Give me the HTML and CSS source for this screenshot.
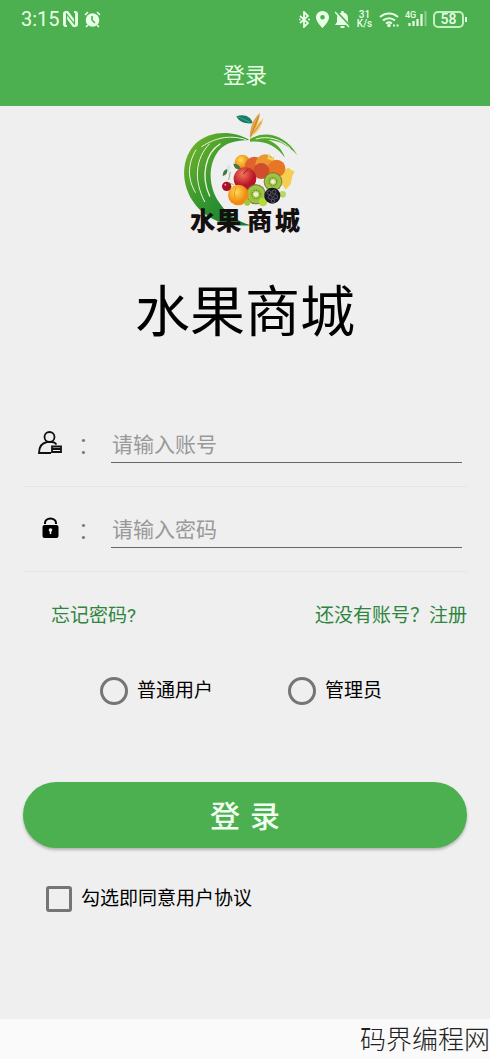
FILE: index.html
```html
<!DOCTYPE html>
<html lang="zh-CN">
<head>
    <meta charset="UTF-8">
    <meta name="viewport" content="width=device-width, initial-scale=1.0">
    <title>登录</title>
    <link rel="stylesheet" href="styles.css">
</head>
<body>
    <header class="header">
        <div class="status-bar">
            <div class="status-left">
                <span class="clock">3:15</span>
                <svg width="15" height="16" viewBox="0 0 15 16">
                    <path d="M3 0h2l6 8V0h1q3 0 3 3v10q0 3-3 3h-2L4 8v8H3q-3 0-3-3V3q0-3 3-3z" fill="#e9ffe6"/>
                    <path d="M5 1l6 8v3L4 4z" fill="#e9ffe6"/>
                    <path d="M3.500 14V3l8 10V2" fill="none" stroke="#4caf50" stroke-width="1.200"/>
                </svg>
                <svg class="alarm" width="17" height="17" viewBox="0 0 17 17">
                    <circle cx="8.5" cy="9" r="6.8" fill="#e9ffe6"/>
                    <path d="M1 4l3-3M16 4l-3-3M4 14l-2 2M13 14l2 2" stroke="#e9ffe6" stroke-width="1.6"/>
                    <path d="M8 5v4l3 3" fill="none" stroke="#4caf50" stroke-width="1.6"/>
                </svg>
            </div>
            <div class="status-right">
                <svg width="11" height="17" viewBox="0 0 11 17">
                    <path d="M1 5l8 7-4 4V1l4 4-8 7" fill="none" stroke="#e9ffe6" stroke-width="1.8"/>
                    <path d="M0 8.500h1.500M9 8.500h2" stroke="#e9ffe6" stroke-width="1.600"/>
                </svg>
                <svg width="13" height="17" viewBox="0 0 13 17">
                    <path fill-rule="evenodd" d="M6.500 0A6.400 6.400 0 0 0 0 6.500C0 11 6.500 17 6.500 17S13 11 13 6.500A6.400 6.400 0 0 0 6.500 0zm0 4a2.300 2.300 0 1 1 0 4.600 2.300 2.300 0 0 1 0-4.600z" fill="#e9ffe6"/>
                </svg>
                <svg width="15" height="17" viewBox="0 0 15 17">
                    <path d="M0 14l2-3V7c0-3 2-5 4.300-5.500V0h2.400v1.500C11.500 2 13 4 13 7v4l2 3zM5.500 15h4v2h-4z" fill="#e9ffe6"/>
                    <path d="M1 0l14 15" stroke="#4caf50" stroke-width="2"/>
                    <path d="M0 1l14 15" stroke="#e9ffe6" stroke-width="1.500"/>
                </svg>
                <span class="speed"><span>31</span><span>K/s</span></span>
                <svg width="20" height="17" viewBox="0 0 20 17">
                    <path d="M1 6a13 13 0 0 1 18 0M4 9.500a9 9 0 0 1 12 0M7 12.500a5 5 0 0 1 6 0" fill="none" stroke="#e9ffe6" stroke-width="2"/>
                    <circle cx="10" cy="14.500" r="1.800" fill="#e9ffe6"/>
                    <path d="M14 14.500h2M17.500 14.500h2" stroke="#e9ffe6" stroke-width="2"/>
                </svg>
                <svg width="22" height="18" viewBox="0 0 22 18">
                    <text class="network" x="0" y="8">4G</text>
                    <path d="M4.500 16v-3M8.500 16v-5M12.500 16V9M16.500 16V4" stroke="#e9ffe6" stroke-width="2.200"/>
                    <path d="M20.500 16V1" stroke="#8bd08b" stroke-width="2"/>
                </svg>
                <span class="battery">58</span>
            </div>
        </div>
        <div class="title-bar">登录</div>
    </header>

    <main class="content">
        <svg class="logo" width="150" height="134" viewBox="0 3 450 402" role="img" aria-label="水果商城">
            <defs>
                <linearGradient id="leaf" x1="0" y1="0" x2="1" y2="1">
                    <stop offset="0" stop-color="#7ab82c"/>
                    <stop offset=".5" stop-color="#36962f"/>
                    <stop offset="1" stop-color="#0b7a36"/>
                </linearGradient>
                <radialGradient id="red" cx=".4" cy=".3">
                    <stop offset="0" stop-color="#f4795a"/>
                    <stop offset="1" stop-color="#b9152a"/>
                </radialGradient>
                <radialGradient id="orange" cx=".4" cy=".35">
                    <stop offset="0" stop-color="#ffdc55"/>
                    <stop offset="1" stop-color="#f08a12"/>
                </radialGradient>
                <radialGradient id="kiwi">
                    <stop offset=".15" stop-color="#f2f3c4"/>
                    <stop offset=".4" stop-color="#8cb834"/>
                    <stop offset=".8" stop-color="#a4c84c"/>
                    <stop offset="1" stop-color="#6b6a24"/>
                </radialGradient>
            </defs>
            <!-- apple outline -->
            <path d="M238 105C190 76 120 76 78 115C34 158 32 230 66 285C102 342 166 367 242 361C198 348 164 320 142 284C112 232 116 166 153 130C176 108 208 107 238 105Z" fill="url(#leaf)"/>
            <path d="M240 102C284 76 344 86 382 150C352 118 323 106 294 105C318 115 335 130 345 158C317 119 281 106 240 110Z" fill="#51a62d"/>
            <g fill="none" stroke="#edf5dc" stroke-linecap="round">
                <path d="M78 135C50 180 54 225 76 262" stroke-width="3"/>
                <path d="M118 117C76 160 70 225 104 290" stroke-width="3"/>
                <path d="M150 117C105 145 92 215 119 273" stroke-width="4"/>
                <path d="M95 125C143 93 187 91 228 104" stroke-width="3"/>
                <path d="M258 102C292 91 334 102 360 129" stroke-width="3"/>
            </g>
            <!-- stem and leaf -->
            <path d="M199 34C222 25 244 35 248 55C225 57 207 51 199 34Z" fill="#137d68"/>
            <path d="M203 35L239 51" stroke="#65b6a0" stroke-width="2"/>
            <path d="M240 101C238 74 248 41 270 24C266 54 255 79 240 101Z" fill="#e5a743"/>
            <path d="M243 95C252 72 264 54 280 39C276 64 263 83 243 95Z" fill="#f0ca73"/>
            <path d="M242 94L267 32M250 84L274 51" stroke="#b76b22" stroke-width="2"/>
            <!-- fruit -->
            <path d="M333 199l23-11 8 7 10 4-7 15-5 24-15 16-13-20z" fill="#f5cf50"/>
            <circle cx="217" cy="172" r="23" fill="url(#orange)"/>
            <circle cx="253" cy="183" r="28" fill="#df632b"/>
            <circle cx="286" cy="178" r="30" fill="#eb9833"/>
            <circle cx="320" cy="190" r="26" fill="#e77725"/>
            <circle cx="274" cy="198" r="24" fill="#d24d2c"/>
            <path d="M292 162l4-17 6 13 12-3-6 12z" fill="#f2d45b"/>
            <circle cx="225" cy="221" r="34" fill="url(#red)"/>
            <path d="M220 208q5-10 14-14" fill="none" stroke="#7b2824" stroke-width="3"/>
            <circle cx="309" cy="230" r="28" fill="url(#kiwi)"/>
            <circle cx="258" cy="268" r="30" fill="url(#kiwi)"/>
            <g fill="none" stroke="#46551a" stroke-width="3" stroke-dasharray="2 5">
                <circle cx="309" cy="230" r="11"/>
                <circle cx="258" cy="268" r="12"/>
            </g>
            <circle cx="205" cy="270" r="31" fill="url(#orange)"/>
            <path d="M198 247q-8 17-3 34" fill="none" stroke="#df850d" stroke-width="2"/>
            <circle cx="232" cy="293" r="9" fill="#a4c834"/>
            <circle cx="279" cy="291" r="13" fill="#b5d83c"/>
            <circle cx="338" cy="268" r="10" fill="#b6d965"/>
            <circle cx="307" cy="272" r="24" fill="#171821"/>
            <g fill="none" stroke="#777383" stroke-width="2">
                <circle cx="297" cy="263" r="6"/><circle cx="312" cy="261" r="6"/>
                <circle cx="301" cy="277" r="6"/><circle cx="317" cy="275" r="6"/>
                <circle cx="309" cy="288" r="5"/>
            </g>
            <circle cx="170" cy="244" r="14" fill="#a80f25"/>
            <circle cx="166" cy="239" r="3" fill="#f19a91"/>
            <path d="M191 239l-17-7M176 225l5-25" stroke="#7a943c" stroke-width="2"/>
            <path d="M158 213q0-18 14-21q3 16-14 21zM190 176q17 0 23 16q-20 4-23-16z" fill="#48743e"/>
            <path d="M174 207l-3-26 10 2z" fill="#c6e9ee"/>
            <text class="logo-text" x="60" y="375">水</text>
            <text class="logo-text" x="138" y="375">果</text>
            <text class="logo-text" x="231" y="375">商</text>
            <text class="logo-text" x="314" y="375">城</text>
        </svg>

        <h1 class="app-name">水果商城</h1>

        <form class="login-form">
            <div class="field">
                <label class="field-label" for="account" aria-label="账号">
                    <svg width="26" height="26" viewBox="0 0 26 26" fill="none" stroke="#111" stroke-width="1.8">
                        <circle cx="11.500" cy="6" r="5"/>
                        <path d="M13 22H1c0-6 3-10 8-11h5c2 0 3.500 1 4.500 2.500"/>
                        <path d="M14 15.500h9V21h-9zM14 18h9"/>
                    </svg>
                    <span class="colon">:</span>
                </label>
                <input type="text" id="account" placeholder="请输入账号">
            </div>
            <div class="field">
                <label class="field-label" for="password" aria-label="密码">
                    <svg width="26" height="26" viewBox="0 0 26 26">
                        <path d="M7 8V7a5.500 4.500 0 0 1 11 0v1" fill="none" stroke="#000" stroke-width="2"/>
                        <rect x="4.500" y="9" width="16" height="13" rx="2" fill="#000"/>
                        <circle cx="12.500" cy="14" r="1.800" fill="#efefef"/>
                        <path d="M12.500 14v4" stroke="#efefef" stroke-width="1.500"/>
                    </svg>
                    <span class="colon">:</span>
                </label>
                <input type="password" id="password" placeholder="请输入密码">
            </div>

            <div class="links">
                <a href="#">忘记密码?</a>
                <a href="#">还没有账号？注册</a>
            </div>

            <div class="roles">
                <label class="option"><input type="radio" name="role" value="user">普通用户</label>
                <label class="option"><input type="radio" name="role" value="admin">管理员</label>
            </div>

            <button type="submit" class="login-btn">登&emsp13;录</button>

            <label class="option agree"><input type="checkbox" name="agree">勾选即同意用户协议</label>
        </form>
    </main>

    <footer class="footer">码界编程网</footer>
</body>
</html>
```

FILE: styles.css
```css
* {
    box-sizing: border-box;
}
body {
    margin: 0;
    min-height: 100vh;
    display: flex;
    flex-direction: column;
    background-color: #efefef;
    color: #000;
    font-family: Roboto, "Noto Sans CJK SC", sans-serif;
    font-size: 19px;
}
svg {
    display: block;
    flex-shrink: 0;
}
.header {
    background-color: #4caf50;
    color: #e9ffe6;
}
.status-bar {
    display: flex;
    justify-content: space-between;
    align-items: center;
    height: 38px;
    padding: 0 26px 0 21px;
}
.status-left {
    display: flex;
    align-items: center;
    gap: 3px;
}
.alarm {
    margin-left: 3px;
}
.clock {
    font-size: 20px;
}
.status-right {
    display: flex;
    align-items: center;
    gap: 6px;
}
.speed {
    display: flex;
    flex-direction: column;
    align-items: center;
    width: 17px;
    font-size: 10px;
    line-height: 9px;
    font-weight: 500;
}
.network {
    font-size: 9px;
    font-weight: 500;
    fill: #e9ffe6;
}
.battery {
    position: relative;
    width: 31px;
    height: 17px;
    border: 2px solid #c4f0c0;
    border-radius: 5px;
    font-size: 14px;
    font-weight: 500;
    line-height: 13px;
    text-align: center;
}
.battery::after {
    content: "";
    position: absolute;
    right: -5px;
    top: 4px;
    width: 2px;
    height: 5px;
    background-color: #e9ffe6;
}
.title-bar {
    height: 68px;
    padding-top: 6px;
    font-size: 22px;
    line-height: 64px;
    text-align: center;
}
.content {
    flex: 1;
    padding: 0 23px;
}
.logo {
    margin: 0 auto;
}
.logo-text {
    font-family: "Noto Sans CJK SC", sans-serif;
    font-size: 76px;
    font-weight: 900;
    fill: #151010;
}
.app-name {
    margin: 32px 0 50px;
    font-size: 55px;
    font-weight: 400;
    line-height: 80px;
    text-align: center;
}
.field {
    display: flex;
    align-items: center;
    height: 85px;
    padding: 0 5px 0 15px;
    border-bottom: 1px solid #e4e4e4;
}
.field-label {
    display: flex;
    align-items: center;
    width: 73px;
    gap: 16px;
}
.colon {
    color: #777;
    font-size: 28px;
}
.field input {
    flex: 1;
    min-width: 0;
    height: 38px;
    padding: 2px 1px 0;
    border: 0;
    border-bottom: 1px solid #666;
    background: none;
    font-family: inherit;
    font-size: 21px;
    outline: none;
}
.field input::placeholder {
    color: #999;
}
.links {
    display: flex;
    justify-content: space-between;
    padding: 29px 0 0 28px;
    line-height: 30px;
}
.links a {
    color: #2e8540;
    text-decoration: none;
}
.roles {
    display: flex;
    justify-content: center;
    gap: 75px;
    padding: 45px 8px 0 0;
}
.option {
    display: flex;
    align-items: center;
    gap: 9px;
    line-height: 30px;
}
.option input {
    appearance: none;
    width: 28px;
    height: 28px;
    margin: 0;
    border: 3px solid #757575;
    border-radius: 50%;
}
.option input:checked {
    background-color: #4caf50;
}
.login-btn {
    display: block;
    width: 100%;
    height: 66px;
    margin-top: 76px;
    padding: 0 0 3px;
    border: none;
    border-radius: 33px;
    background-color: #4caf50;
    box-shadow: 0 2px 3px rgba(0, 0, 0, 0.25);
    color: #f1fff0;
    font-family: inherit;
    font-size: 30px;
    font-weight: 500;
    cursor: pointer;
}
.agree {
    padding: 36px 0 30px 23px;
}
.option input[type="checkbox"] {
    width: 26px;
    height: 26px;
    border-radius: 3px;
}
.footer {
    height: 40px;
    background-color: #fafafa;
    color: #222;
    font-size: 26px;
    font-weight: 300;
    line-height: 42px;
    text-align: right;
}
```
